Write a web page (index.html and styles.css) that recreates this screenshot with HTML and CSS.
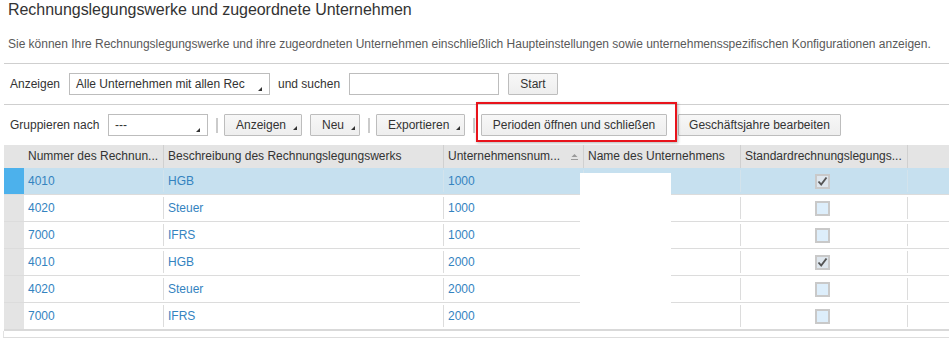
FILE: index.html
```html
<!DOCTYPE html>
<html lang="de">
<head>
<meta charset="utf-8">
<title>Rechnungslegungswerke</title>
<link rel="stylesheet" href="styles.css">
</head>
<body>
<div class="page">
  <h1 class="title">Rechnungslegungswerke und zugeordnete Unternehmen</h1>
  <p class="desc">Sie können Ihre Rechnungslegungswerke und ihre zugeordneten Unternehmen einschließlich Haupteinstellungen sowie unternehmensspezifischen Konfigurationen anzeigen.</p>
  <div class="rule"></div>
  <div class="toolbar tb1">
    <span class="label lbl-show">Anzeigen</span>
    <div class="select sel-wide"><span>Alle Unternehmen mit allen Rec</span><i class="arrow"></i></div>
    <span class="label lbl-search">und suchen</span>
    <div class="input"></div>
    <button class="btn btn-start">Start</button>
  </div>
  <div class="rule rule2"></div>
  <div class="toolbar tb2">
    <span class="label lbl-group">Gruppieren nach</span>
    <div class="select sel-group"><span>---</span><i class="arrow"></i></div>
    <span class="sep"></span>
    <button class="btn btn-menu w-show">Anzeigen<i class="arrow"></i></button>
    <button class="btn btn-menu w-new">Neu<i class="arrow"></i></button>
    <span class="sep"></span>
    <button class="btn btn-menu w-export">Exportieren<i class="arrow"></i></button>
    <span class="sep"></span>
    <span class="hl"><button class="btn btn-plain w-periods">Perioden öffnen und schließen</button></span>
    <button class="btn btn-plain w-fy">Geschäftsjahre bearbeiten</button>
  </div>

  <div class="table">
    <div class="thead">
      <div class="th th-sel"></div>
      <div class="th">Nummer des Rechnun...</div>
      <div class="th">Beschreibung des Rechnungslegungswerks</div>
      <div class="th th-sort"><span>Unternehmensnum...</span>
        <svg class="sort" width="7" height="6" viewBox="0 0 7 6"><polygon points="3.5,0 6.5,3 0.5,3" fill="#9a9a9a"/><rect x="0" y="5" width="7" height="1" fill="#9a9a9a"/></svg>
      </div>
      <div class="th">Name des Unternehmens</div>
      <div class="th">Standardrechnungslegungs...</div>
      <div class="th th-last"></div>
    </div>

    <div class="tr selected">
      <div class="td sel"></div>
      <div class="td">4010</div>
      <div class="td">HGB</div>
      <div class="td">1000</div>
      <div class="td"></div>
      <div class="td cbcell"><span class="cb checked"><svg width="11" height="11" viewBox="0 0 11 11"><path d="M1.5 5.5 L4.2 8.6 L9.5 1.5" fill="none" stroke="#555" stroke-width="1.9"/></svg></span></div>
      <div class="td last"></div>
    </div>
    <div class="tr">
      <div class="td sel"></div>
      <div class="td">4020</div>
      <div class="td">Steuer</div>
      <div class="td">1000</div>
      <div class="td"></div>
      <div class="td cbcell"><span class="cb"></span></div>
      <div class="td last"></div>
    </div>
    <div class="tr">
      <div class="td sel"></div>
      <div class="td">7000</div>
      <div class="td">IFRS</div>
      <div class="td">1000</div>
      <div class="td"></div>
      <div class="td cbcell"><span class="cb"></span></div>
      <div class="td last"></div>
    </div>
    <div class="tr">
      <div class="td sel"></div>
      <div class="td">4010</div>
      <div class="td">HGB</div>
      <div class="td">2000</div>
      <div class="td"></div>
      <div class="td cbcell"><span class="cb checked"><svg width="11" height="11" viewBox="0 0 11 11"><path d="M1.5 5.5 L4.2 8.6 L9.5 1.5" fill="none" stroke="#555" stroke-width="1.9"/></svg></span></div>
      <div class="td last"></div>
    </div>
    <div class="tr">
      <div class="td sel"></div>
      <div class="td">4020</div>
      <div class="td">Steuer</div>
      <div class="td">2000</div>
      <div class="td"></div>
      <div class="td cbcell"><span class="cb"></span></div>
      <div class="td last"></div>
    </div>
    <div class="tr tr-last">
      <div class="td sel"></div>
      <div class="td">7000</div>
      <div class="td">IFRS</div>
      <div class="td">2000</div>
      <div class="td"></div>
      <div class="td cbcell"><span class="cb"></span></div>
      <div class="td last"></div>
    </div>
    <div class="tfoot"></div>
    <div class="redact"></div>
  </div>
</div>
</body>
</html>
```

FILE: styles.css
```css
* { box-sizing: border-box; }

html, body {
  margin: 0;
  padding: 0;
  background: #fff;
}

body {
  font-family: "Liberation Sans", Arial, sans-serif;
  color: #333;
  font-size: 12px;
}

.page {
  width: 949px;
  padding-left: 4px;
  overflow: hidden;
}

.title {
  margin: 0;
  padding-left: 4px;
  font-size: 16px;
  font-weight: normal;
  line-height: 20px;
  color: #333;
  white-space: nowrap;
  letter-spacing: -0.04px;
}

.desc {
  margin: 17px 0 0;
  padding-left: 4px;
  font-size: 12px;
  line-height: 14px;
  color: #595959;
  white-space: nowrap;
  letter-spacing: -0.02px;
}

.rule {
  height: 1px;
  margin-top: 12px;
  background: #cfcfcf;
}

.rule2 { margin-top: 9px; }

.toolbar {
  display: flex;
  align-items: center;
  height: 22px;
  padding-left: 6px;
  margin-top: 9px;
  font-size: 12px;
  white-space: nowrap;
}

.label { color: #333; flex: none; }
.lbl-show { width: 59px; }
.lbl-search { width: 71px; margin-left: 8px; }
.lbl-group { width: 98px; }

.select {
  display: flex;
  align-items: center;
  justify-content: space-between;
  flex: none;
  height: 22px;
  border: 1px solid #bdbdbd;
  background: #fff;
  padding: 0 7px 0 6px;
  color: #333;
}

.select .arrow {
  align-self: flex-end;
  margin-bottom: 3px;
}

.arrow {
  display: inline-block;
  flex: none;
  width: 0;
  height: 0;
  border-left: 4px solid transparent;
  border-bottom: 4px solid #333;
}

.sel-wide { width: 201px; }

.input {
  flex: none;
  width: 150px;
  height: 22px;
  border: 1px solid #bdbdbd;
  background: #fff;
}

.btn {
  display: inline-flex;
  align-items: center;
  flex: none;
  height: 22px;
  margin: 0;
  border: 1px solid #bdbdbd;
  border-radius: 1px;
  background: linear-gradient(#f7f7f7, #eeeeee);
  font-family: "Liberation Sans", Arial, sans-serif;
  font-size: 12px;
  color: #333;
  white-space: nowrap;
}

.btn-start {
  width: 50px;
  justify-content: center;
  padding: 0;
  margin-left: 9px;
}

.sel-group { width: 100px; }

.sep {
  flex: none;
  width: 2px;
  height: 15px;
  margin: 0 6px 0 8px;
  background: #cbcbcb;
}

.btn-menu {
  padding: 0 4px 0 11px;
}

.btn-menu .arrow {
  margin-left: auto;
  align-self: flex-end;
  margin-bottom: 5px;
}

.w-show { width: 78px; }
.w-new { width: 50px; margin-left: 8px; }
.w-export { width: 89px; }

.btn-plain {
  justify-content: center;
  padding: 0;
}

.w-periods { width: 186px; }
.w-fy { width: 163px; margin-left: 11px; }

.hl {
  position: relative;
  display: inline-flex;
  flex: none;
}

.hl::after {
  content: "";
  position: absolute;
  top: -12px;
  left: -5px;
  right: -10px;
  bottom: -6px;
  border: 2px solid #e8131b;
  box-shadow: 1px 1px 3px rgba(0, 0, 0, 0.3);
  pointer-events: none;
}

/* Table */
.table {
  position: relative;
  margin-top: 9px;
}

.thead,
.tr {
  display: grid;
  grid-template-columns: 20px 140px 280px 140px 157px 167px 1fr;
}

.thead {
  height: 23px;
  background: #e4e4e4;
}

.th {
  padding-left: 4px;
  line-height: 23px;
  font-size: 12px;
  color: #333;
  border-right: 1px solid #d0d0d0;
  white-space: nowrap;
  overflow: hidden;
}

.th-sel { border-right: 0; }
.th-last { border-right: 0; }

.th-sort {
  display: flex;
  align-items: center;
  justify-content: space-between;
  padding-right: 5px;
}

.tr {
  height: 27px;
  border-bottom: 1px solid #dcdcdc;
}

.tr-last {
  height: 28px;
  border-bottom-width: 2px;
  border-bottom-color: #d9d9d9;
}

.td {
  padding-left: 4px;
  line-height: 26px;
  font-size: 12px;
  color: #3483bf;
  white-space: nowrap;
  overflow: hidden;
  background: linear-gradient(#dcdcdc, #dcdcdc) right center / 1px calc(100% - 4px) no-repeat;
}

.td.sel {
  background: #e4e4e4;
}

.td.last { background: none; }

.selected { background: #c6e0ef; }
.selected .td.sel { background: #4cb1ec; }
.selected .td { background-image: linear-gradient(#d3e3ec, #d3e3ec); }
.selected .td.sel { background-image: none; }
.selected .td.last { background-image: none; }

.cbcell {
  display: flex;
  align-items: center;
  justify-content: center;
  padding: 0 4px 0 0;
}

.cb {
  display: flex;
  align-items: center;
  justify-content: center;
  width: 15px;
  height: 15px;
  border: 2px solid #c9c9c9;
  background: #ddeefb;
}

.cb.checked { background: #dfe7ee; }

.tfoot {
  height: 7px;
  margin-left: -1px;
  border-left: 1px solid #e2e2e2;
  border-bottom: 1px solid #dddddd;
}

.redact {
  position: absolute;
  left: 576px;
  top: 28px;
  width: 91px;
  height: 156px;
  background: #fff;
}
```
